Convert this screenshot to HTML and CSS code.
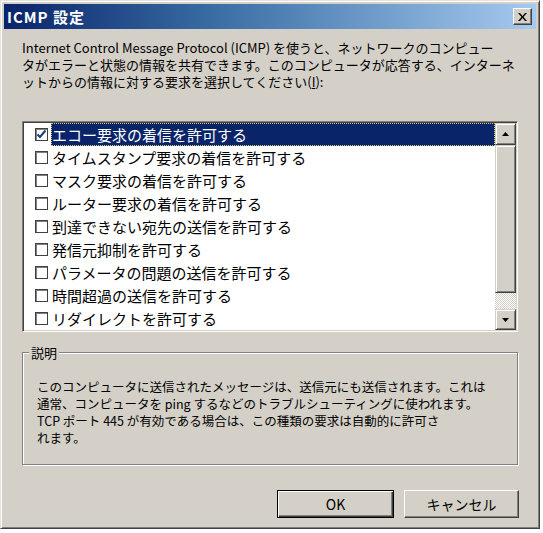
FILE: index.html
```html
<!DOCTYPE html>
<html lang="ja">
<head>
  <meta charset="UTF-8">
  <title>ICMP 設定</title>
  <link rel="stylesheet" href="styles.css">
</head>
<body>
<div class="ventana">
  <div class="barra-titulo">
    <span class="titulo">ICMP 設定</span>
    <span class="cerrar">
      <svg width="9" height="8" viewBox="0 0 9 8"><path d="M0 0h2l2.5 3 2.5-3h2L5.5 4 9 8H7L4.5 5 2 8H0l3.5-4z" fill="#000"/></svg>
    </span>
  </div>

  <div class="contenido">
    <p class="intro">Internet Control Message Protocol (ICMP) を使うと、ネットワークのコンピュー<br>タがエラーと状態の情報を共有できます。このコンピュータが応答する、インターネ<br>ットからの情報に対する要求を選択してください(<u>I</u>):</p>

    <div class="lista">
      <ul class="items">
        <li class="seleccionado"><span class="casilla marcada"><svg width="11" height="11" viewBox="0 0 11 11"><path d="M1.5 5.5l2.5 2.5 5.5-6.5" fill="none" stroke="#1c3a7a" stroke-width="2"/></svg></span><span class="texto">エコー要求の着信を許可する</span></li>
        <li><span class="casilla"></span><span class="texto">タイムスタンプ要求の着信を許可する</span></li>
        <li><span class="casilla"></span><span class="texto">マスク要求の着信を許可する</span></li>
        <li><span class="casilla"></span><span class="texto">ルーター要求の着信を許可する</span></li>
        <li><span class="casilla"></span><span class="texto">到達できない宛先の送信を許可する</span></li>
        <li><span class="casilla"></span><span class="texto">発信元抑制を許可する</span></li>
        <li><span class="casilla"></span><span class="texto">パラメータの問題の送信を許可する</span></li>
        <li><span class="casilla"></span><span class="texto">時間超過の送信を許可する</span></li>
        <li><span class="casilla"></span><span class="texto">リダイレクトを許可する</span></li>
      </ul>
      <div class="scroll">
        <div class="scroll-btn arriba"><svg width="7" height="4" viewBox="0 0 7 4"><path d="M3.5 0L7 4H0z" fill="#000"/></svg></div>
        <div class="scroll-thumb"></div>
        <div class="scroll-pista"></div>
        <div class="scroll-btn abajo"><svg width="7" height="4" viewBox="0 0 7 4"><path d="M0 0h7L3.5 4z" fill="#000"/></svg></div>
      </div>
    </div>

    <fieldset class="grupo">
      <legend>説明</legend>
      <p>このコンピュータに送信されたメッセージは、送信元にも送信されます。これは<br>通常、コンピュータを ping するなどのトラブルシューティングに使われます。<br>TCP ポート 445 が有効である場合は、この種類の要求は自動的に許可さ<br>れます。</p>
    </fieldset>

    <div class="botones">
      <button class="boton por-defecto">OK</button>
      <button class="boton">キャンセル</button>
    </div>
  </div>
</div>
</body>
</html>
```

FILE: styles.css
```css
/* Ventana clásica */
body {
  margin: 0;
  background-color: #ffffff;
  font-family: "Noto Sans CJK JP", "Noto Sans", sans-serif;
  color: #000000;
}

.ventana {
  width: 540px;
  height: 529px;
  box-sizing: border-box;
  padding: 3px;
  background-color: #d4d0c8;
  border: 1px solid;
  border-color: #e4e2dc #404040 #404040 #e4e2dc;
  box-shadow: inset 1px 1px #ffffff, inset -1px -1px #808080;
}

.barra-titulo {
  height: 25px;
  display: flex;
  align-items: center;
  justify-content: space-between;
  padding: 0 4px 0 3px;
  background: linear-gradient(90deg, #0a246a 0%, #3a6ea5 40%, #a6caf0 100%);
}

.titulo {
  color: white;
  font-weight: bold;
  font-size: 15px;
  line-height: 17px;
  letter-spacing: 1px;
}

.cerrar {
  width: 19px;
  height: 17px;
  box-sizing: border-box;
  display: flex;
  align-items: center;
  justify-content: center;
  background-color: #d4d0c8;
  border: 1px solid;
  border-color: #ffffff #404040 #404040 #ffffff;
  box-shadow: inset -1px -1px #808080;
}

.contenido {
  padding: 10px 18px 0 18px;
}

.intro {
  margin: 0;
  font-size: 13px;
  line-height: 17px;
  white-space: nowrap;
}

/* Lista con casillas */
.lista {
  margin-top: 31px;
  height: 211px;
  box-sizing: border-box;
  display: flex;
  background-color: white;
  border: 1px solid;
  border-color: #808080 #ffffff #ffffff #808080;
  box-shadow: inset 1px 1px #404040, inset -1px -1px #d4d0c8;
  padding: 1px;
}

.items {
  list-style: none;
  margin: 0;
  padding: 0;
  flex: 1;
}

.items li {
  height: 23px;
  display: flex;
  align-items: center;
  font-size: 15px;
  white-space: nowrap;
}

.casilla {
  width: 13px;
  height: 13px;
  box-sizing: border-box;
  margin: 0 3px 0 11px;
  border: 1px solid #404040;
  box-shadow: inset 1px 1px #808080;
  background-color: white;
  display: flex;
  align-items: center;
  justify-content: center;
}

.texto {
  flex: 1;
  height: 100%;
  display: flex;
  align-items: center;
  padding-left: 1px;
  box-sizing: border-box;
}

.seleccionado .texto {
  background-color: #0a246a;
  color: white;
  outline: 1px dotted #d9c77a;
  outline-offset: -1px;
}

.scroll {
  width: 21px;
  display: flex;
  flex-direction: column;
}

.scroll-btn,
.scroll-thumb {
  box-sizing: border-box;
  background-color: #d4d0c8;
  border: 1px solid;
  border-color: #d4d0c8 #404040 #404040 #d4d0c8;
  box-shadow: inset 1px 1px #ffffff, inset -1px -1px #808080;
}

.scroll-btn {
  display: flex;
  align-items: center;
  justify-content: center;
}

.arriba { height: 22px; }
.abajo { height: 21px; }
.scroll-thumb { height: 148px; }

.scroll-pista {
  height: 16px;
  background-color: #e8e6e1;
  background-image: repeating-conic-gradient(#ffffff 0 25%, #d4d0c8 0 50%);
  background-size: 2px 2px;
}

/* Grupo de descripción */
.grupo {
  margin: 12px 0 0 0;
  padding: 17px 14px 18px 14px;
  min-width: 0;
  border: 1px solid #808080;
  box-shadow: inset 1px 1px #ffffff, 1px 1px #ffffff;
}

.grupo legend {
  margin-left: -8px;
  padding: 0 2px;
  font-size: 13px;
  line-height: 17px;
  background-color: #d4d0c8;
}

.grupo p {
  margin: 0;
  font-size: 12.5px;
  line-height: 17px;
  white-space: nowrap;
}

.botones {
  margin-top: 25px;
  display: flex;
  justify-content: flex-end;
  gap: 10px;
  margin-right: -1px;
}

.boton {
  height: 28px;
  width: 115px;
  box-sizing: border-box;
  font-family: inherit;
  font-size: 14px;
  background-color: #d4d0c8;
  border: 1px solid;
  border-color: #ffffff #404040 #404040 #ffffff;
  box-shadow: inset -1px -1px #808080;
  padding: 0;
}

.por-defecto {
  width: 117px;
  border: 1px solid #000000;
  box-shadow: inset 1px 1px #ffffff, inset -1px -1px #404040, inset -2px -2px #808080;
}
```
